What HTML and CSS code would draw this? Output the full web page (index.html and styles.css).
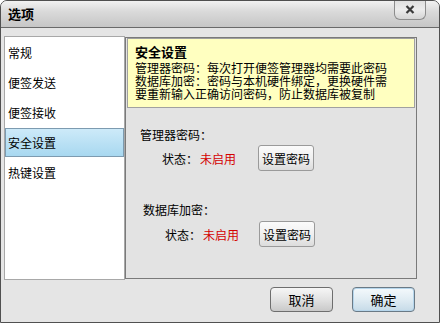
FILE: index.html
```html
<!DOCTYPE html>
<html lang="zh">
<head>
<meta charset="utf-8">
<link rel="stylesheet" href="styles.css">
</head>
<body>
<div class="window">
  <div class="titlebar">
    <span class="title">选项</span>
    <button class="close" aria-label="关闭">
      <svg width="10" height="9" viewBox="0 0 10 9"><path d="M1.5 1 L8.5 8 M8.5 1 L1.5 8" stroke="#3a3a3a" stroke-width="2.2" stroke-linecap="butt"/></svg>
    </button>
  </div>
  <div class="main">
    <ul class="nav">
      <li class="nav-item">常规</li>
      <li class="nav-item">便签发送</li>
      <li class="nav-item">便签接收</li>
      <li class="nav-item selected">安全设置</li>
      <li class="nav-item">热键设置</li>
    </ul>
    <div class="panel">
      <div class="info">
        <div class="info-title">安全设置</div>
        <div class="info-line">管理器密码：每次打开便签管理器均需要此密码</div>
        <div class="info-line">数据库加密：密码与本机硬件绑定，更换硬件需</div>
        <div class="info-line">要重新输入正确访问密码，防止数据库被复制</div>
      </div>
      <div class="section sec-a">
        <div class="label">管理器密码：</div>
        <div class="status-row">
          <span class="status">状态：</span><span class="off">未启用</span>
          <button class="btn small">设置密码</button>
        </div>
      </div>
      <div class="section sec-b">
        <div class="label">数据库加密：</div>
        <div class="status-row">
          <span class="status">状态：</span><span class="off">未启用</span>
          <button class="btn small">设置密码</button>
        </div>
      </div>
    </div>
  </div>
  <div class="footer">
    <button class="btn big">取消</button>
    <button class="btn big default">确定</button>
  </div>
</div>
</body>
</html>
```
FILE: styles.css
```css
* { box-sizing: border-box; }
html, body { margin: 0; padding: 0; }
body {
  width: 440px;
  height: 323px;
  background: #ffffff;
  font-family: "Noto Sans CJK SC", "DejaVu Sans", sans-serif;
  font-size: 12px;
  color: #000;
}
.window {
  width: 440px;
  height: 323px;
  border: 1px solid #505050;
  border-radius: 7px 7px 0 0;
  background: #e5e5e5;
  display: flex;
  flex-direction: column;
  overflow: hidden;
}
.titlebar {
  height: 27px;
  flex: none;
  display: flex;
  align-items: flex-start;
  background: linear-gradient(#f2f2f2, #dadada 40%, #c6c6c6);
  border-bottom: 1px solid #6a6a6a;
}
.title {
  font-weight: bold;
  font-size: 13px;
  line-height: 26px;
  padding-left: 7px;
  flex: 1;
}
.close {
  margin: -1px 13px 0 0;
  width: 32px;
  height: 20px;
  border: 1px solid #8c8c8c;
  border-top: none;
  border-radius: 0 0 6px 6px;
  background: linear-gradient(#dedede, #ececec 50%, #d4d4d4);
  display: flex;
  align-items: center;
  justify-content: center;
  padding: 0;
}
.main {
  display: flex;
  padding: 8px 0 0 3px;
  height: 252px;
  flex: none;
}
.nav {
  list-style: none;
  margin: 0;
  padding: 1px 0 0;
  width: 121px;
  height: 244px;
  background: #fff;
  border: 1px solid #a8a8a8;
}
.nav-item {
  height: 30px;
  line-height: 29px;
  padding-left: 3px;
  font-size: 12px;
}
.nav-item.selected {
  height: 29px;
  line-height: 27px;
  margin-bottom: 1px;
  border: 1px solid #7d9bb0;
  background: linear-gradient(#cdeaf9, #a8d8f0);
  padding-left: 2px;
}
.panel {
  margin: 1px 0 0 0;
  width: 292px;
  height: 242px;
  border: 1px solid #7a7a7a;
  background: #e3e3e3;
}
.info {
  margin: 0 1px;
  border: 1px solid #a0a0a0;
  background: #ffffc0;
  padding: 6px 7px 6px;
  height: 70px;
}
.info-title {
  font-weight: bold;
  font-size: 13px;
  line-height: 14px;
  margin-bottom: 2px;
}
.info-line {
  font-size: 12px;
  line-height: 13px;
  white-space: nowrap;
}
.section { display: flex; flex-direction: column; }
.sec-a { padding: 19px 0 0 14px; }
.sec-b { padding: 31px 0 0 17px; }
.label { line-height: 16px; }
.sec-a .status-row { margin: 2px 0 0 22px; }
.sec-b .status-row { margin: 3px 0 0 22px; }
.status-row {
  display: flex;
  align-items: center;
  height: 26px;
}
.off { color: #d40000; margin-left: 2px; }
.btn {
  font-family: "Noto Sans CJK SC", "DejaVu Sans", sans-serif;
  font-size: 12px;
  color: #000;
  padding: 0;
  cursor: default;
}
.small {
  width: 56px;
  height: 26px;
  border: 1px solid #9a9a9a;
  border-radius: 3px;
  background: linear-gradient(#fbfbfb, #f0f0f0 50%, #dcdcdc);
}
.sec-a .small { margin-left: 22px; }
.sec-b .small { margin-left: 20px; }
.footer {
  display: flex;
  justify-content: flex-end;
  gap: 19px;
  padding: 7px 24px 0 0;
}
.big {
  width: 63px;
  height: 25px;
  border: 1px solid #6e6e6e;
  border-radius: 4px;
  background: linear-gradient(#f6f6f6, #e2e2e2 50%, #c9c9c9);
  font-size: 13px;
}
.big.default {
  background: linear-gradient(#f4f9fc, #e0ecf3 50%, #c6dbe8);
  box-shadow: inset 0 0 0 1px #b6d6ec;
  border-color: #6a7a86;
}
```
